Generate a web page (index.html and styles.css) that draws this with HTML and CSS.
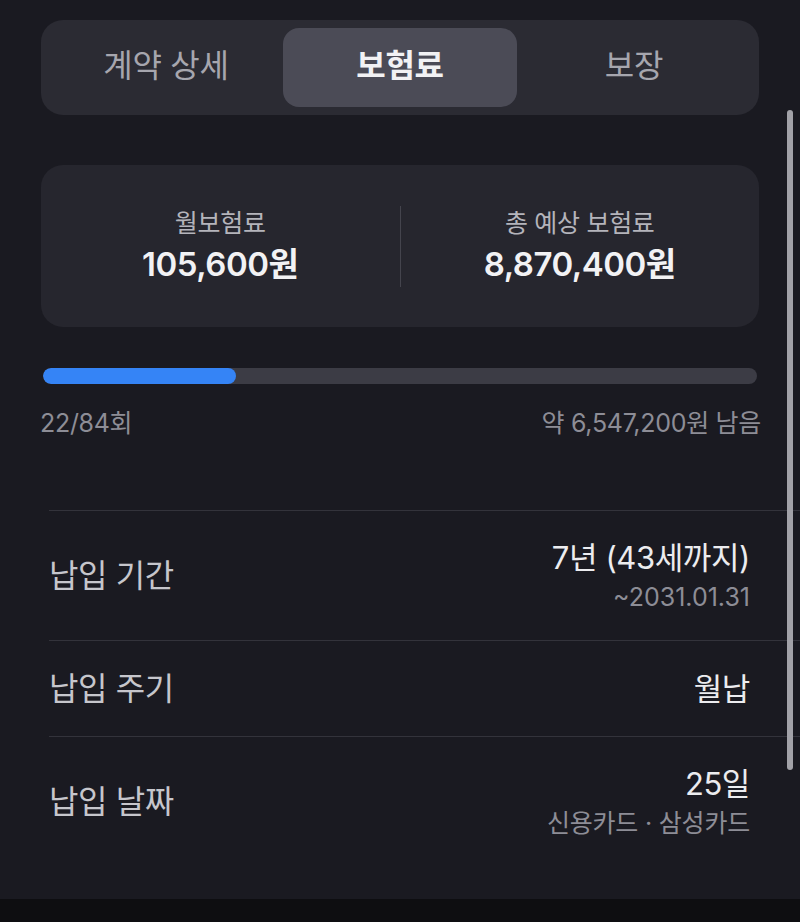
FILE: index.html
```html
<!DOCTYPE html>
<html lang="ko">
<head>
<meta charset="utf-8">
<title>보험료</title>
<link rel="stylesheet" href="styles.css">
</head>
<body>
<div class="screen">
  <main class="content">
    <nav class="tabs">
      <div class="tab">계약 상세</div>
      <div class="tab active">보험료</div>
      <div class="tab">보장</div>
    </nav>

    <section class="summary">
      <div class="sum-col">
        <div class="sum-label">월보험료</div>
        <div class="sum-value">105,600원</div>
      </div>
      <div class="sum-divider"></div>
      <div class="sum-col">
        <div class="sum-label">총 예상 보험료</div>
        <div class="sum-value">8,870,400원</div>
      </div>
    </section>

    <section class="progress">
      <div class="track"><div class="fill" style="width: 27%"></div></div>
      <div class="progress-meta">
        <span>22/84회</span>
        <span>약 6,547,200원 남음</span>
      </div>
    </section>

    <section class="rows">
      <div class="row row-tall">
        <div class="row-label">납입 기간</div>
        <div class="row-values">
          <div class="row-value">7년 (43세까지)</div>
          <div class="row-sub">~2031.01.31</div>
        </div>
      </div>
      <div class="row row-short">
        <div class="row-label">납입 주기</div>
        <div class="row-values">
          <div class="row-value">월납</div>
        </div>
      </div>
      <div class="row row-tall">
        <div class="row-label">납입 날짜</div>
        <div class="row-values">
          <div class="row-value">25일</div>
          <div class="row-sub card">신용카드 · 삼성카드</div>
        </div>
      </div>
    </section>
  </main>
  <div class="scrollbar"></div>
  <footer class="bottom-band"></footer>
</div>
</body>
</html>
```

FILE: styles.css
```css
* { box-sizing: border-box; }

html, body {
  margin: 0;
  padding: 0;
  background: #1a1a21;
}

body {
  font-family: Inter, "Noto Sans CJK KR", sans-serif;
  color: #ececef;
}

.screen {
  position: relative;
  width: 800px;
  height: 922px;
  overflow: hidden;
  display: flex;
  flex-direction: column;
}

.content {
  flex: 1;
  padding: 20px 0 0 41px;
  display: flex;
  flex-direction: column;
}

.tabs {
  width: 718px;
  height: 95px;
  background: #2b2b33;
  border-radius: 22px;
  padding: 8px;
  display: grid;
  grid-template-columns: 1fr 1fr 1fr;
}

.tab {
  display: flex;
  align-items: center;
  justify-content: center;
  padding-bottom: 3px;
  font-size: 32px;
  line-height: 40px;
  color: #a6a6ae;
  letter-spacing: -0.3px;
  border-radius: 16px;
}

.tab.active {
  background: #4b4b56;
  color: #f2f2f4;
  font-weight: 700;
}

.summary {
  margin-top: 50px;
  width: 718px;
  height: 162px;
  background: #26262e;
  border-radius: 22px;
  display: flex;
  align-items: center;
}

.sum-col {
  flex: 1;
  display: flex;
  flex-direction: column;
  align-items: center;
  gap: 6px;
}

.sum-label {
  font-size: 25px;
  color: #b4b4bb;
  line-height: 30px;
  letter-spacing: -0.3px;
}

.sum-value {
  font-size: 33px;
  font-weight: 600;
  color: #f2f2f4;
  line-height: 40px;
  letter-spacing: -0.5px;
}

.sum-divider {
  width: 1px;
  height: 81px;
  background: #44444d;
}

.progress {
  margin-top: 41px;
  width: 718px;
}

.track {
  margin: 0 2px;
  height: 16px;
  border-radius: 8px;
  background: #3c3c45;
  overflow: hidden;
}

.fill {
  height: 100%;
  border-radius: 8px;
  background: #3584f6;
}

.progress-meta {
  margin: 24px -2px 0 -1px;
  display: flex;
  justify-content: space-between;
  font-size: 25px;
  color: #8d8d96;
  line-height: 30px;
  letter-spacing: -0.3px;
}

.rows {
  margin-top: 72px;
  margin-left: 8px;
  display: flex;
  flex-direction: column;
}

.row {
  display: flex;
  align-items: center;
  justify-content: space-between;
  border-top: 1px solid #33333b;
  padding-right: 50px;
}

.row-tall { height: 130px; }
.row-short { height: 96px; }

.row-label {
  font-size: 32px;
  line-height: 40px;
  color: #c6c6cc;
  letter-spacing: -0.4px;
}

.row-values {
  display: flex;
  flex-direction: column;
  align-items: flex-end;
  gap: 5px;
}

.row-value {
  font-size: 31px;
  color: #ececef;
  line-height: 38px;
  letter-spacing: -0.4px;
}

.row-sub {
  font-size: 25px;
  color: #8d8d96;
  line-height: 30px;
  letter-spacing: 0;
}

.row-sub.card {
  letter-spacing: -0.2px;
}

.scrollbar {
  position: absolute;
  left: 787px;
  top: 110px;
  width: 6px;
  height: 660px;
  border-radius: 3px;
  background: #a2a2a8;
}

.bottom-band {
  height: 23px;
  background: #0e0e11;
}
```
